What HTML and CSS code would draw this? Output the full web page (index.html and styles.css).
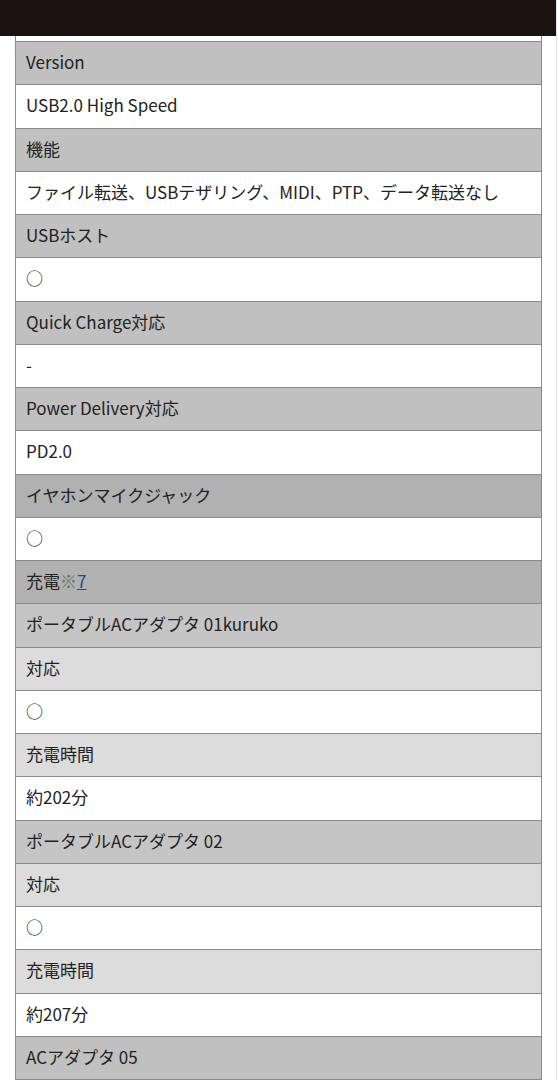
FILE: index.html
```html
<!DOCTYPE html>
<html lang="ja">
<head>
<meta charset="utf-8">
<link rel="stylesheet" href="styles.css">
</head>
<body>
<div class="page">
  <div class="topbar"></div>
  <div class="spec">
    <div class="row cut"></div>
    <div class="row h">Version</div>
    <div class="row v">USB2.0 High Speed</div>
    <div class="row h">機能</div>
    <div class="row v">ファイル転送、USBテザリング、MIDI、PTP、データ転送なし</div>
    <div class="row h">USBホスト</div>
    <div class="row v">○</div>
    <div class="row h">Quick Charge対応</div>
    <div class="row v">-</div>
    <div class="row h">Power Delivery対応</div>
    <div class="row v">PD2.0</div>
    <div class="row d">イヤホンマイクジャック</div>
    <div class="row v">○</div>
    <div class="row d">充電<span class="note">※</span><a class="ref" href="#">7</a></div>
    <div class="row m">ポータブルACアダプタ 01kuruko</div>
    <div class="row l">対応</div>
    <div class="row v">○</div>
    <div class="row l">充電時間</div>
    <div class="row v">約202分</div>
    <div class="row m">ポータブルACアダプタ 02</div>
    <div class="row l">対応</div>
    <div class="row v">○</div>
    <div class="row l">充電時間</div>
    <div class="row v">約207分</div>
    <div class="row h">ACアダプタ 05</div>
  </div>
</div>
</body>
</html>
```
FILE: styles.css
```css
html, body {
  margin: 0;
  padding: 0;
  background: #ffffff;
}
body {
  font-family: "Noto Sans CJK JP", "Noto Sans", sans-serif;
  font-size: 17px;
  color: #222222;
  overflow: hidden;
  height: 1080px;
}
.page {
  width: 556px;
  border-right: 1px solid #e2e2e2;
  min-height: 1080px;
}
.topbar {
  height: 36px;
  background: #1b1211;
}
.spec {
  margin-left: 15px;
  width: 525px;
  border-left: 1px solid #8a8a8a;
  border-right: 1px solid #8a8a8a;
}
.row {
  box-sizing: border-box;
  height: 43.25px;
  border-bottom: 1px solid #8a8a8a;
  padding-left: 10px;
  padding-bottom: 3px;
  display: flex;
  align-items: center;
  white-space: nowrap;
  line-height: 1;
}
.row.cut {
  height: 6px;
  padding-bottom: 0;
}
.h { background: #c0c0c0; }
.d { background: #b1b1b1; }
.m { background: #c5c5c5; }
.l { background: #dcdcdc; }
.v { background: #ffffff; }
.note {
  color: #6a6a6a;
}
.ref {
  color: #1f4c98;
  text-decoration: underline;
}
```
